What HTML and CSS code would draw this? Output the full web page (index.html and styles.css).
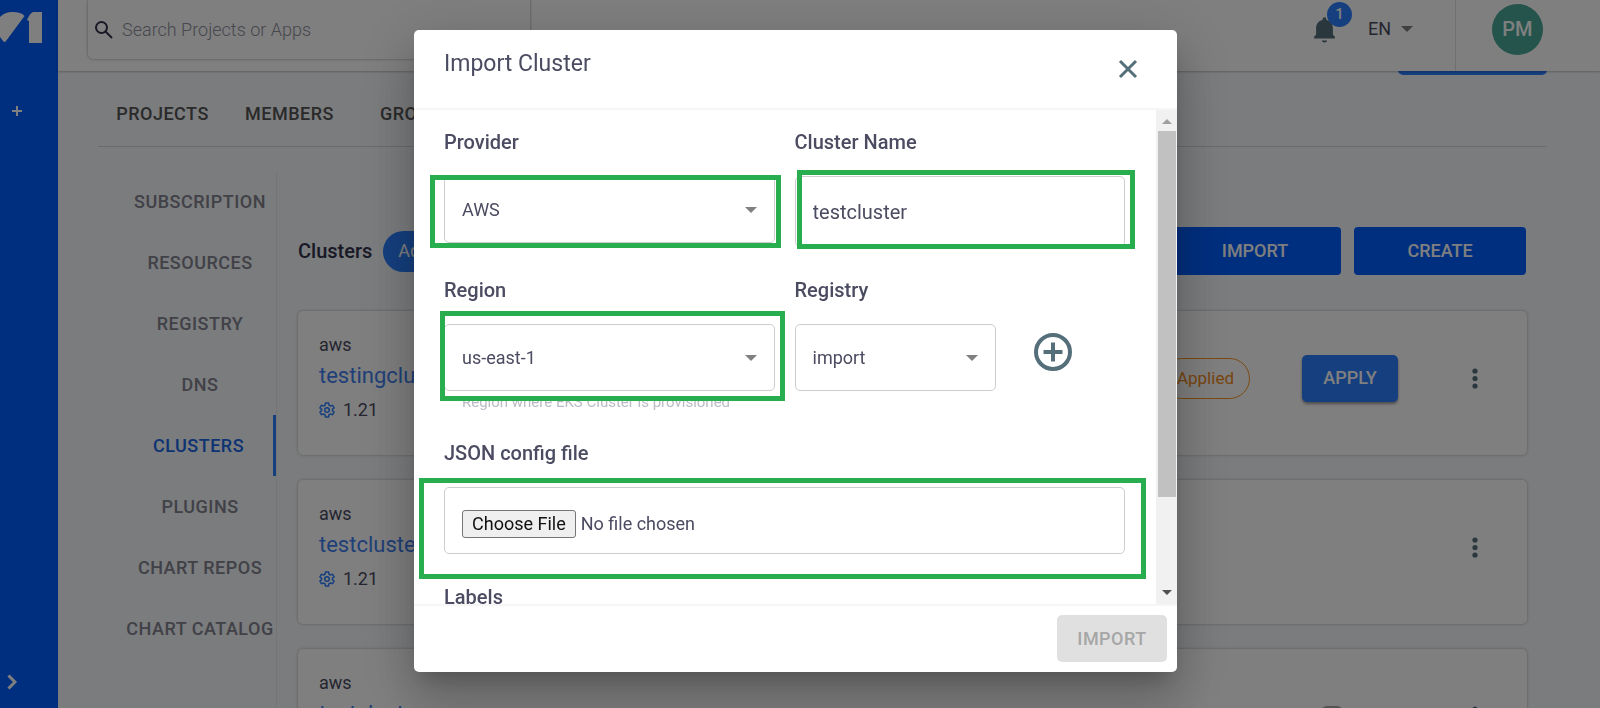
FILE: index.html
```html
<!DOCTYPE html>
<html lang="en">
<head>
<meta charset="utf-8">
<title>Clusters</title>
<link rel="stylesheet" href="styles.css">
</head>
<body>
<div class="app">
  <aside class="rail">
    <svg class="logo" width="44" height="44" viewBox="0 0 44 44" aria-hidden="true"><path d="M0 17C4 13 8 12 13 12c5 0 9 1 11.500 4L6 41q-1.500 2-3 0L0 37zM29 43V21l-2-1q3-7 6-8h9v31z"/></svg>
    <button class="rail-btn" aria-label="Add"><svg width="10" height="10" viewBox="0 0 10 10"><path d="M5 0v10M0 5h10"/></svg></button>
    <button class="rail-btn rail-expand" aria-label="Expand"><svg width="10" height="16" viewBox="0 0 10 16"><path d="M1.500 1.500L8 8l-6.500 6.500"/></svg></button>
  </aside>
  <div class="page">
    <header class="topbar">
      <label class="search">
        <svg width="24" height="24" viewBox="0 0 24 24" aria-hidden="true"><circle cx="9.500" cy="9.500" r="5.500"/><path d="M13.500 13.500l6.500 6.500"/></svg>
        <input type="search" placeholder="Search Projects or Apps" aria-label="Search Projects or Apps">
      </label>
      <div class="tools">
        <button class="bell" aria-label="Notifications">
          <svg width="31" height="31" viewBox="0 0 24 24"><path d="M12 22c1.100 0 2-.6 2-1.500h-4c0 .9.900 1.500 2 1.500zm6.500-6v-5c0-3.070-1.630-5.640-5-6.320V4a1.500 1.500 0 0 0-3 0v.68C7.140 5.360 5.500 7.920 5.500 11v5L4 17.500V19h16v-1.500z"/></svg>
          <span class="badge">1</span>
        </button>
        <button class="lang">EN <i class="caret"></i></button>
        <div class="account"><span class="avatar">PM</span></div>
      </div>
    </header>
    <main class="main">
      <button class="primary-peek" aria-label="Project actions"></button>
      <nav class="tabs"><a href="#">PROJECTS</a><a href="#">MEMBERS</a><a href="#">GROUPS</a></nav>
      <div class="columns">
        <nav class="side">
          <a href="#">SUBSCRIPTION</a><a href="#">RESOURCES</a><a href="#">REGISTRY</a><a href="#">DNS</a>
          <a href="#" class="active">CLUSTERS</a><a href="#">PLUGINS</a><a href="#">CHART REPOS</a><a href="#">CHART CATALOG</a>
        </nav>
        <section class="content">
          <div class="heading">
            <h2>Clusters</h2><button class="chip">Add</button>
            <div class="actions"><button class="blue">IMPORT</button><button class="blue">CREATE</button></div>
          </div>
          <article class="card">
            <div class="info"><span>aws</span><a href="#">testingcluster</a><p><svg class="gear" width="16" height="16" viewBox="0 0 16 16"><path d="M6.500 1h3l.5 2.200 1.400.8 2.200-.7 1.500 2.600-1.700 1.500v1.200l1.700 1.500-1.500 2.600-2.200-.7-1.400.8-.5 2.200h-3L6 12.800 4.600 12l-2.200.7-1.500-2.600 1.700-1.500V7.400L.9 5.900l1.500-2.600 2.200.7L6 3.200z"/><circle cx="8" cy="8" r="2.300"/></svg>1.21</p></div>
            <span class="status">Applied</span><button class="apply">APPLY</button>
            <button class="more" aria-label="More"><svg width="6" height="21" viewBox="0 0 6 21"><circle cx="3" cy="3" r="2.600"/><circle cx="3" cy="10.500" r="2.600"/><circle cx="3" cy="18" r="2.600"/></svg></button>
          </article>
          <article class="card">
            <div class="info"><span>aws</span><a href="#">testcluster</a><p><svg class="gear" width="16" height="16" viewBox="0 0 16 16"><path d="M6.500 1h3l.5 2.200 1.400.8 2.200-.7 1.500 2.600-1.700 1.500v1.200l1.700 1.500-1.500 2.600-2.200-.7-1.400.8-.5 2.200h-3L6 12.800 4.600 12l-2.200.7-1.500-2.600 1.700-1.500V7.400L.9 5.900l1.500-2.600 2.200.7L6 3.200z"/><circle cx="8" cy="8" r="2.300"/></svg>1.21</p></div>
            <button class="more" aria-label="More"><svg width="6" height="21" viewBox="0 0 6 21"><circle cx="3" cy="3" r="2.600"/><circle cx="3" cy="10.500" r="2.600"/><circle cx="3" cy="18" r="2.600"/></svg></button>
          </article>
          <article class="card">
            <div class="info"><span>aws</span><a href="#">testcluster</a><p>1.21</p></div>
            <span class="pending"></span>
            <button class="more" aria-label="More"><svg width="6" height="21" viewBox="0 0 6 21"><circle cx="3" cy="3" r="2.600"/><circle cx="3" cy="10.500" r="2.600"/><circle cx="3" cy="18" r="2.600"/></svg></button>
          </article>
        </section>
      </div>
    </main>
  </div>
</div>

<div class="backdrop">
  <div class="modal" role="dialog" aria-modal="true" aria-labelledby="dlg-title">
    <div class="modal-head">
      <h1 id="dlg-title">Import Cluster</h1>
      <button class="close" aria-label="Close"><svg width="20" height="20" viewBox="0 0 20 20"><path d="M2 2l16 16M18 2L2 18"/></svg></button>
    </div>
    <div class="modal-body">
      <form class="form" id="import-form">
        <div class="group">
          <label for="provider">Provider</label>
          <div class="field"><select id="provider"><option>AWS</option></select><i class="caret"></i><span class="mark mark-provider"></span></div>
        </div>
        <div class="group">
          <label for="name">Cluster Name</label>
          <div class="field"><input type="text" id="name" value="testcluster"><span class="mark mark-name"></span></div>
        </div>
        <div class="group">
          <label for="region">Region</label>
          <div class="field"><select id="region"><option>us-east-1</option></select><i class="caret"></i><span class="mark mark-region"></span></div>
          <small>Region where EKS Cluster is provisioned</small>
        </div>
        <div class="group">
          <label for="registry">Registry</label>
          <div class="registry">
            <div class="field"><select id="registry"><option>import</option></select><i class="caret"></i></div>
            <button type="button" class="add" aria-label="Add registry"><svg width="38" height="38" viewBox="0 0 38 38"><circle cx="19" cy="19" r="17"/><path d="M19 9.500v19M9.500 19h19"/></svg></button>
          </div>
        </div>
        <div class="group wide">
          <label for="config">JSON config file</label>
          <div class="field"><input type="file" id="config"><span class="mark mark-file"></span></div>
        </div>
        <div class="group wide"><label for="labels">Labels</label><div class="field"><input type="text" id="labels"></div></div>
      </form>
      <div class="scrollbar" aria-hidden="true"><i class="up"></i><div class="track"><div class="thumb"></div></div><i class="down"></i></div>
    </div>
    <div class="modal-foot"><button class="submit" form="import-form" disabled>IMPORT</button></div>
  </div>
</div>
</body>
</html>
```

FILE: styles.css
```css
* { box-sizing: border-box; }
body { margin: 0; font: 18px/24px Roboto, sans-serif; color: #4b4b61; overflow: hidden; }
button { font: inherit; border: 0; padding: 0; background: none; cursor: pointer; }
a { color: inherit; text-decoration: none; }
h1, h2, p { margin: 0; }
svg { display: block; flex: none; }
.app { display: flex; height: 100vh; overflow: hidden; background: #f5f8fb; }

.rail { flex: 0 0 58px; display: flex; flex-direction: column; align-items: flex-start; background: #005eff; }
.logo { fill: #fff; margin-bottom: 62px; }
.rail-btn { margin-left: 12px; }
.rail-btn path { fill: none; stroke: #fff; stroke-width: 2; }
.rail-expand { margin: auto 0 18px 7px; }
.rail-expand path { stroke-width: 3; }

.page { flex: 1; min-width: 0; display: flex; flex-direction: column; }
.topbar { position: relative; z-index: 1; flex: 0 0 71px; display: flex; justify-content: space-between; align-items: flex-start; background: #fff; box-shadow: 0 1px 2px rgba(0, 0, 0, .25); }
.search { display: flex; align-items: center; gap: 4px; width: 442px; height: 59px; margin-left: 30px; padding-left: 4px; border-radius: 0 0 5px 5px; box-shadow: 0 0 3px rgba(0, 0, 0, .4); }
.search svg { fill: none; stroke: #33334d; stroke-width: 2; }
.search input { flex: 1; border: 0; outline: 0; background: none; font: inherit; font-weight: 300; }
.search input::placeholder { color: #8e8e9c; }
.tools { display: flex; height: 71px; align-items: flex-start; }
.bell { position: relative; margin: 14px 28px 0 0; }
.bell svg { fill: #546e7a; }
.badge { position: absolute; left: 18px; top: -12px; width: 25px; height: 25px; border-radius: 50%; background: #2b7fff; color: #fff; font-size: 15px; font-weight: 500; line-height: 25px; }
.lang { display: flex; align-items: center; gap: 10px; height: 58px; margin-right: 42px; color: #4b4b61; }
.caret { width: 0; border: 6px solid transparent; border-top-color: #808080; border-bottom: 0; }
.account { width: 145px; height: 71px; padding: 4px 0 0 36px; border-left: 1px solid #e0e0e0; }
.avatar { display: block; width: 51px; height: 51px; border-radius: 50%; background: #4aa898; color: #fff; font-size: 20px; font-weight: 500; line-height: 51px; text-align: center; }

.main { flex: 1; display: flex; flex-direction: column; margin: -40px 53px 0 40px; }
.primary-peek { flex: none; align-self: flex-end; width: 149px; height: 44px; border-radius: 5px; background: #2b7fff; }
.tabs { display: flex; height: 72px; flex: none; padding: 27px 0 0 1px; border-bottom: 1px solid #d2d6da; color: #555; font-weight: 500; letter-spacing: .5px; }
.tabs a { flex: 0 0 127px; text-align: center; }
.columns { display: flex; flex: none; align-items: stretch; padding: 24px 20px 0 26px; }
.side { flex: 0 0 153px; margin-right: 21px; border-right: 1px solid #e8ebee; color: #82828f; font-weight: 500; letter-spacing: .5px; }
.side a { display: flex; align-items: center; justify-content: center; height: 61px; white-space: nowrap; }
.side .active { color: #1a66e6; border-right: 3px solid #2b7fff; }
.content { flex: 1; display: flex; flex-direction: column; gap: 25px; }
.heading { display: flex; align-items: center; height: 48px; margin: 56px 1px 11px 0; }
.heading h2 { color: #33334d; font-size: 20px; font-weight: 500; }
.chip { height: 41px; margin-left: 11px; padding: 0 15px; border-radius: 21px; background: #2b7fff; color: #fff; }
.actions { display: flex; gap: 13px; margin-left: auto; }
.blue { width: 172px; height: 48px; border-radius: 4px; background: #005eff; color: #fff; font-weight: 500; }
.card { display: flex; align-items: center; height: 144px; flex: none; padding: 0 49px 10px 21px; border-radius: 5px; background: #fff; box-shadow: 0 0 3px rgba(0, 0, 0, .3); }
.info { margin-right: auto; padding-bottom: 1px; color: #4b4b61; }
.info a { display: block; margin: 5px 0 8px; color: #3f7ff0; font-size: 22px; line-height: 28px; }
.info p { display: flex; align-items: center; gap: 8px; }
.gear { fill: none; stroke: #2b7fff; stroke-width: 1.5; }
.status { height: 41px; padding: 0 15px; border: 1px solid #f7931e; border-radius: 21px; color: #f08a1a; font-size: 17px; line-height: 38px; }
.apply { width: 96px; height: 47px; margin: 0 74px 0 52px; border-radius: 5px; background: #2b7fff; color: #fff; font-weight: 500; box-shadow: 0 2px 3px rgba(0, 0, 0, .4); }
.more svg { fill: #546e7a; }
.pending { width: 22px; height: 20px; margin-right: 129px; border-radius: 6px; background: #a8a8a8; }

.backdrop { position: fixed; inset: 0; z-index: 5; display: flex; justify-content: center; padding: 30px 9px 36px 0; background: rgba(0, 0, 0, .5); }
.modal { display: flex; flex-direction: column; width: 100%; max-width: 763px; overflow: hidden; border-radius: 5px; background: #fff; box-shadow: 0 13px 19px -8px rgba(0, 0, 0, .2), 0 30px 47px 4px rgba(0, 0, 0, .14), 0 11px 57px 10px rgba(0, 0, 0, .12); }
.modal-head { display: flex; flex: 0 0 80px; justify-content: space-between; padding: 20px 39px 0 30px; border-bottom: 2px solid #f6f6f6; }
.modal-head h1 { font-size: 23px; font-weight: 400; line-height: 28px; }
.close { align-self: flex-start; margin-top: 9px; }
.close path { fill: none; stroke: #546e7a; stroke-width: 3; }
.modal-body { flex: 1; min-height: 0; display: flex; overflow: hidden; }
.form { flex: 1; display: grid; grid-template-columns: 1fr 1fr; align-content: start; gap: 31px 20px; padding: 20px 31px 20px 30px; }
.wide { grid-column: 1 / -1; }
.group > label { display: block; margin-bottom: 22px; font-size: 20px; font-weight: 500; }
.group small { display: block; margin: 3px 18px 0; color: #bbbbc6; font-size: 15px; line-height: 16px; white-space: nowrap; }
.field { position: relative; display: flex; align-items: center; }
.field select, .field input { width: 100%; height: 67px; padding: 0 17px; border: 1px solid #cdcdd0; border-radius: 5px; outline: 0; background: #fff; color: #4b4b61; font: 18px/24px Roboto, sans-serif; appearance: none; }
.field input[type="text"] { height: 71px; font-size: 20px; }
.field input[type="file"] { padding: 22px 17px 16px; line-height: 28px; }
.field input::file-selector-button { height: 28px; margin-right: 5px; padding: 0 9px; border: 1px solid #767676; border-radius: 3px; background: #efefef; color: #111; font: 18px/24px Roboto, sans-serif; }
.field .caret { position: absolute; right: 18px; pointer-events: none; }
.registry { display: flex; align-items: flex-start; }
.registry .field { flex: 0 0 201px; }
.add { margin: 9px 0 0 38px; }
.add svg { fill: none; stroke: #546e7a; stroke-width: 4; }
.mark { position: absolute; border: 5px solid #28ae4e; pointer-events: none; }
.mark-provider { inset: -1px -6px -5px -14px; }
.mark-name { inset: -6px -10px -2px 2px; }
.mark-region { inset: -13px -10px -10px -4px; }
.mark-file { inset: -9px -21px -25px -25px; }
.scrollbar { flex: 0 0 21px; display: flex; flex-direction: column; align-items: center; background: #f1f1f1; }
.scrollbar .up, .scrollbar .down { margin: 9px 0 7px; border: 5px solid transparent; }
.scrollbar .up { border-top: 0; border-bottom-color: #a0a0a0; }
.scrollbar .down { border-bottom: 0; border-top-color: #505050; margin: 7px 0 9px; }
.track { flex: 1; width: 18px; }
.thumb { height: 81%; background: #c1c1c1; }
.modal-foot { display: flex; flex: none; justify-content: flex-end; padding: 9px 10px 10px; border-top: 2px solid #f6f6f6; }
.submit { width: 110px; height: 47px; border-radius: 5px; background: #e0e0e0; color: #a6a6a6; font-weight: 500; letter-spacing: .5px; }
```
